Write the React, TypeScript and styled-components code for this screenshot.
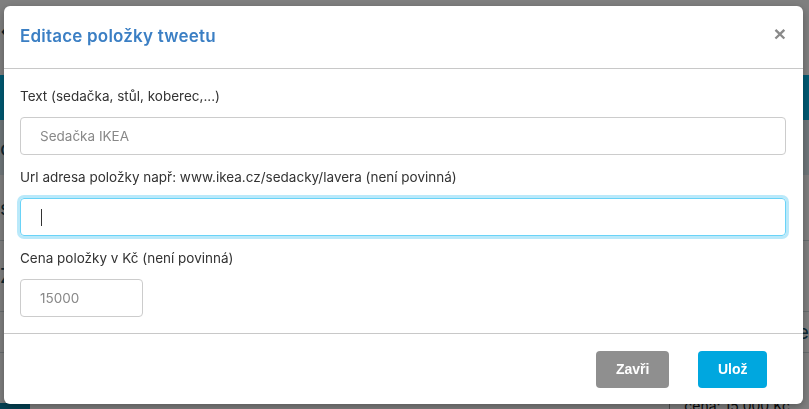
import * as React from 'react';
import styled, { createGlobalStyle } from 'styled-components';

const GlobalStyle = createGlobalStyle`
  html, body {
    margin: 0;
    padding: 0;
    width: 809px;
    height: 409px;
    overflow: hidden;
    font-family: Inter, "Noto Sans", sans-serif;
    background: #fff;
  }
`

// --- page behind the dialog ---
const Page = styled.div`
  width: 809px;
  height: 409px;
  display: flex;
  flex-direction: column;
  color: #1d4f66;
`
const TopBar = styled.div`
  height: 75px;
  display: flex;
  align-items: flex-start;
  padding-top: 12px;
  box-sizing: border-box;
  font-size: 30px;
  color: #0c3d55;
`
const Banner = styled.div`
  height: 45px;
  background: #00b4e6;
`
const Band = styled.div`
  height: 55px;
  background: #dfeef4;
  display: flex;
  align-items: center;
  font-size: 22px;
`
const Row = styled.div<{ $h: number }>`
  height: ${p => p.$h}px;
  border-bottom: 1px solid #cfd8dc;
  display: flex;
  align-items: center;
  justify-content: space-between;
  font-size: 20px;
`
const PageFooter = styled.div`
  flex: 1;
  display: flex;
  justify-content: space-between;
  align-items: flex-end;
`
const TealChip = styled.div`
  width: 30px;
  height: 6px;
  background: #0a84a8;
`
const Price = styled.div`
  border-left: 1px solid #999;
  padding: 0 19px 0 14px;
  font-size: 14px;
  color: #111;
  line-height: 14px;
  height: 10px;
  overflow: hidden;
  white-space: nowrap;
`

// --- dialog ---
const Overlay = styled.div`
  position: fixed;
  inset: 0;
  background: rgba(0, 0, 0, 0.5);
  padding: 6px 6px 5px 4px;
  box-sizing: border-box;
  display: flex;
`
const Dialog = styled.div`
  flex: 1;
  background: #fff;
  border-radius: 6px;
  display: flex;
  flex-direction: column;
  box-shadow: 0 3px 9px rgba(0, 0, 0, 0.3);
`
const Header = styled.div`
  height: 63px;
  box-sizing: border-box;
  border-bottom: 1px solid #c8c8c8;
  display: flex;
  align-items: center;
  justify-content: space-between;
  padding: 0 17px 2px 16px;
`
const Title = styled.h4`
  margin: 0;
  font-size: 17px;
  font-weight: 600;
  color: #3b7fc4;
  letter-spacing: 0.2px;
`
const Close = styled.button`
  border: 0;
  background: none;
  padding: 0;
  margin-bottom: 6px;
  font-family: "Liberation Sans", Arial, sans-serif;
  font-size: 21px;
  font-weight: 700;
  color: #8a8a8a;
  line-height: 1;
`
const Body = styled.div`
  flex: 1;
  border-bottom: 1px solid #c8c8c8;
  padding: 17px 17px 0 16px;
  display: flex;
  flex-direction: column;
`
const Label = styled.label`
  font-size: 13.5px;
  color: #333;
  line-height: 20px;
  margin-bottom: 11px;
`
const Input = styled.input<{ $width?: number }>`
  box-sizing: border-box;
  width: ${p => (p.$width ? `${p.$width}px` : '100%')};
  height: 38px;
  padding: 0 19px;
  margin-bottom: 12px;
  border-radius: 4px;
  font-family: inherit;
  font-size: 13.5px;
  color: #777;
  outline: none;
  border: 1px solid #cccccc;
  &::placeholder {
    color: #888;
  }
`
const FocusedInput = styled.div`
  box-sizing: border-box;
  width: 100%;
  height: 38px;
  padding: 0 20px;
  margin-bottom: 12px;
  border-radius: 4px;
  border: 1px solid #6ad3f7;
  box-shadow: 0 0 0 3px rgba(102, 206, 245, 0.45);
  display: flex;
  align-items: center;
`
const Caret = styled.span`
  display: inline-block;
  width: 1px;
  height: 17px;
  background: #333;
`
const Footer = styled.div`
  height: 70px;
  display: flex;
  align-items: center;
  justify-content: flex-end;
  gap: 29px;
  padding: 0 36px 0 0;
`
const Button = styled.button<{ $variant: 'grey' | 'blue' }>`
  height: 37px;
  padding: 0 ${p => (p.$variant === 'grey' ? '20px' : '19.5px')};
  border: 0;
  border-radius: 4px;
  font-family: "Liberation Sans", Arial, sans-serif;
  font-size: 14px;
  font-weight: 700;
  color: #fff;
  background: ${p => (p.$variant === 'grey' ? '#8f8f8f' : '#00a7df')};
`

export default function App() {
  return (
    <>
      <GlobalStyle />
      <Page>
        <TopBar>&lsaquo;</TopBar>
        <Banner />
        <Band>c</Band>
        <Row $h={65}>s</Row>
        <Row $h={70}>Z</Row>
        <Row $h={40}><span /><span>e</span></Row>
        <PageFooter>
          <TealChip />
          <Price>cena: 15 000 Kč</Price>
        </PageFooter>
      </Page>
      <Overlay>
        <Dialog>
          <Header>
            <Title>Editace položky tweetu</Title>
            <Close>×</Close>
          </Header>
          <Body>
            <Label>Text (sedačka, stůl, koberec,...)</Label>
            <Input placeholder="Sedačka IKEA" />
            <Label>Url adresa položky např: www.ikea.cz/sedacky/lavera (není povinná)</Label>
            <FocusedInput><Caret /></FocusedInput>
            <Label>Cena položky v Kč (není povinná)</Label>
            <Input $width={123} placeholder="15000" />
          </Body>
          <Footer>
            <Button $variant="grey">Zavři</Button>
            <Button $variant="blue">Ulož</Button>
          </Footer>
        </Dialog>
      </Overlay>
    </>
  );
}
